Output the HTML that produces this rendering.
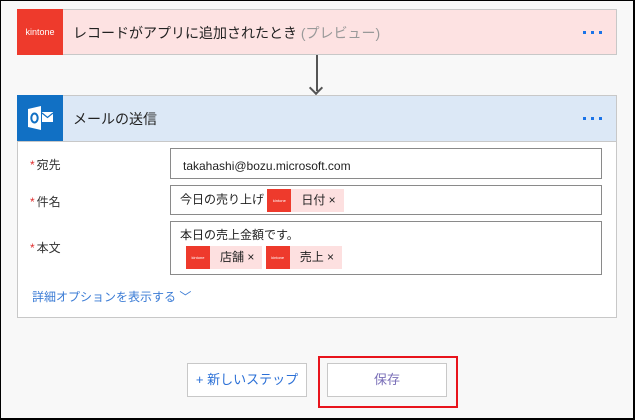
<!DOCTYPE html>
<html><head><meta charset="utf-8"><style>
*{box-sizing:border-box;margin:0;padding:0}
body{width:635px;height:420px;background:#f8f8f8;border:1px solid #000;border-right-width:2px;border-bottom-width:2px;position:relative;overflow:hidden;font-family:"Liberation Sans","Noto Sans CJK JP",sans-serif;color:#222}
.abs{position:absolute}
.card{position:absolute;left:16px;width:600px;border:1px solid #c8c8c8}
.hdr{height:46px;position:relative}
.ico{position:absolute;left:-1px;top:-1px;width:46px;height:46px}
.title{position:absolute;left:55px;top:13px;font-size:14px}
.dots{position:absolute;right:22px;top:21px;width:3px;height:3px;background:#1a73e8;box-shadow:8px 0 #1a73e8,-8px 0 #1a73e8}
.lbl{position:absolute;left:12px;font-size:12px;color:#333}
.lbl b{color:#e03030;font-weight:normal;margin-right:2px}
.inp{position:absolute;left:152px;width:432px;border:1px solid #8a8a8a;background:#fff;font-size:12px}
.tok{display:inline-block;height:23px;background:#fde0e0;vertical-align:middle;font-size:12px;line-height:23px;padding-right:8px}
.tok i{display:inline-block;width:24px;height:23px;background:#ee3a2c;vertical-align:top;margin-right:10px;font-style:normal;color:#fff;font-size:4px;text-align:center}
.btn{position:absolute;top:362px;width:120px;height:34px;border:1px solid #c8c8c8;background:#fff;text-align:center;line-height:32px;font-size:13px;color:#2a6fd6}
</style></head><body>
<div class="card" style="top:8px;height:46px;background:#fde2e2">
 <div class="ico" style="background:#ee3a2c;color:#fff;font-size:9px;text-align:center;line-height:46px">kintone</div>
 <div class="title">レコードがアプリに追加されたとき <span style="color:#999">(プレビュー)</span></div>
 <div class="dots"></div>
</div>
<div class="abs" style="left:315px;top:54px;width:2px;height:36px;background:#555"></div>
<div class="abs" style="left:310px;top:82px;width:10px;height:10px;border-right:2px solid #555;border-bottom:2px solid #555;transform:rotate(45deg)"></div>
<div class="card" style="top:94px;height:223px;background:#fff">
 <div class="hdr" style="background:#dce8f6;border-bottom:1px solid #c8c8c8">
  <div class="ico" style="background:#1170c4">
   <svg width="46" height="46" viewBox="0 0 46 46"><path d="M11 14 L24 11 L24 35 L11 32 Z" fill="#fff"/><ellipse cx="17.5" cy="23" rx="3.2" ry="4.5" fill="none" stroke="#1170c4" stroke-width="2"/><rect x="25" y="17" width="11" height="10" fill="#fff"/><path d="M25 18 L30.5 22.5 L36 18" fill="none" stroke="#1170c4" stroke-width="1.2"/></svg>
  </div>
  <div class="title">メールの送信</div>
  <div class="dots"></div>
 </div>
 <div class="lbl" style="top:60px"><b>*</b>宛先</div>
 <div class="inp" style="top:52px;height:31px;padding:10px 0 0 12px">takahashi@bozu.microsoft.com</div>
 <div class="lbl" style="top:97px"><b>*</b>件名</div>
 <div class="inp" style="top:89px;height:30px;padding:3px 0 0 9px">今日の売り上げ <span class="tok"><i>kintone</i>日付 ×</span></div>
 <div class="lbl" style="top:143px"><b>*</b>本文</div>
 <div class="inp" style="top:125px;height:54px;padding:4px 0 0 9px">本日の売上金額です。<br><div style="margin:3px 0 0 6px"><span class="tok"><i>kintone</i>店舗 ×</span> <span class="tok"><i>kintone</i>売上 ×</span></div></div>
 <div class="abs" style="left:14px;top:192px;font-size:12px;color:#3a7bd5">詳細オプションを表示する ﹀</div>
</div>
<div class="btn" style="left:186px">+ 新しいステップ</div>
<div class="abs" style="left:317px;top:355px;width:140px;height:52px;border:2px solid #e8141c"></div>
<div class="btn" style="left:326px;color:#7a6fb8">保存</div>
</body></html>
